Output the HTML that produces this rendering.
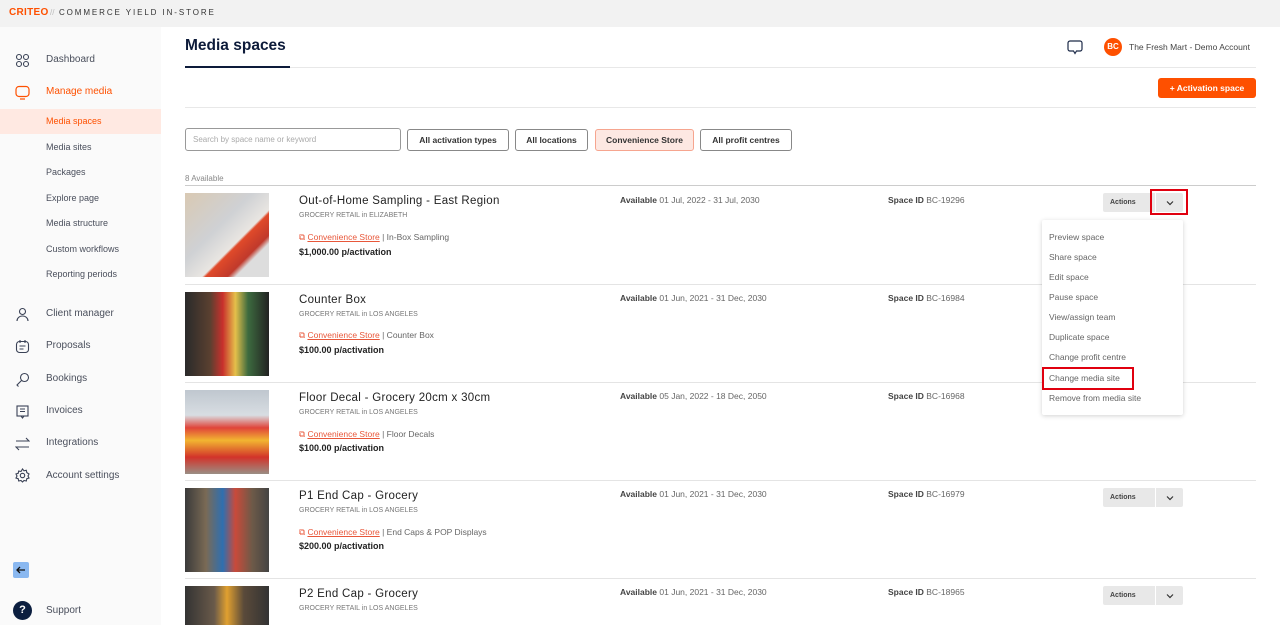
<!DOCTYPE html>
<html style="width:1280px;height:625px;overflow:hidden"><head><style>
*{margin:0;padding:0;box-sizing:border-box}
body{width:1280px;height:625px;overflow:hidden;font-family:"Liberation Sans",sans-serif;background:#fff;position:relative;color:#333}
.abs{position:absolute}
.top{left:0;top:0;width:1280px;height:27px;background:#f2f2f2}
.side{left:0;top:27px;width:161px;height:598px;background:#fafafa}
.nav{position:absolute;left:46px;font-size:10px;color:#4a4f5c}
.sub{position:absolute;left:46px;font-size:9px;color:#4a4f5c}
.ic{position:absolute;left:15px;width:15px;height:15px}
.btn{position:absolute;top:129px;height:22px;border:1px solid #888;border-radius:3px;font-size:8.5px;font-weight:bold;color:#333;display:flex;align-items:center;justify-content:center;background:#fff}
.row-t{position:absolute;left:299px;font-size:11.5px;color:#222;letter-spacing:.3px}
.row-s{position:absolute;left:299px;font-size:7px;color:#777}
.row-l{position:absolute;left:299px;font-size:8.5px;color:#666}
.row-l a{color:#e8573a;text-decoration:underline}
.row-p{position:absolute;left:299px;font-size:9px;color:#222;font-weight:bold}
.av{position:absolute;left:620px;font-size:8.5px;color:#666}
.av b,.sid b{color:#444}
.sid{position:absolute;left:888px;font-size:8.5px;color:#666}
.img{position:absolute;left:185px;width:84px;height:84px}
.hr{position:absolute;left:185px;width:1071px;height:1px;background:#e4e4e4}
.act{position:absolute;left:1103px;width:80px;height:19px;background:#e8e8e8;border-radius:2px;font-size:7px;font-weight:bold;color:#444;overflow:hidden}
.act span{position:absolute;left:7px;top:0;line-height:19px}
.act i{position:absolute;left:52px;top:0;width:1px;height:19px;background:#fff}
.act svg{position:absolute;left:63px;top:7px}
.mi{position:absolute;left:1049px;font-size:8.5px;color:#666}
</style></head><body>
<div class="abs top"></div>
<div class="abs" style="left:9px;top:7px;font-size:10px;font-weight:bold;color:#fe5000;letter-spacing:.3px">CRITEO</div>
<div class="abs" style="left:50px;top:8px;font-size:8px;color:#bbb">//</div>
<div class="abs" style="left:59px;top:8px;font-size:8px;color:#333;letter-spacing:1.9px">COMMERCE YIELD IN-STORE</div>

<div class="abs side"></div>
<svg class="ic" style="top:53px" viewBox="0 0 15 15" fill="none" stroke="#3a4256" stroke-width="1.1"><circle cx="4" cy="4" r="2.5"/><circle cx="11" cy="4" r="2.5"/><circle cx="4" cy="11" r="2.5"/><circle cx="11" cy="11" r="2.5"/></svg>
<div class="nav" style="top:54px">Dashboard</div>
<svg class="ic" style="top:85px" viewBox="0 0 15 15" fill="none" stroke="#fe5000" stroke-width="1.2"><rect x="1" y="1.5" width="13" height="10" rx="3"/><path d="M5 14h5"/></svg>
<div class="nav" style="top:86px;color:#fe5000">Manage media</div>
<div class="abs" style="left:0;top:109px;width:161px;height:25px;background:#ffe9e2"></div>
<div class="sub" style="top:116px;color:#fe5000">Media spaces</div>
<div class="sub" style="top:142px">Media sites</div>
<div class="sub" style="top:167px">Packages</div>
<div class="sub" style="top:193px">Explore page</div>
<div class="sub" style="top:218px">Media structure</div>
<div class="sub" style="top:244px">Custom workflows</div>
<div class="sub" style="top:269px">Reporting periods</div>
<svg class="ic" style="top:307px" viewBox="0 0 15 15" fill="none" stroke="#3a4256" stroke-width="1.1"><circle cx="7.5" cy="4.5" r="3"/><path d="M2 14c0-3 2.5-5 5.5-5s5.5 2 5.5 5"/></svg>
<div class="nav" style="top:308px">Client manager</div>
<svg class="ic" style="top:339px" viewBox="0 0 15 15" fill="none" stroke="#3a4256" stroke-width="1.1"><rect x="1.5" y="2.5" width="12" height="11" rx="3"/><path d="M5 1v3M10 1v3M4.5 7h6M4.5 10h4"/></svg>
<div class="nav" style="top:340px">Proposals</div>
<svg class="ic" style="top:372px" viewBox="0 0 15 15" fill="none" stroke="#3a4256" stroke-width="1.1"><circle cx="9.5" cy="5.5" r="4"/><path d="M6.5 8.5L2 13l1.5 1.5"/></svg>
<div class="nav" style="top:373px">Bookings</div>
<svg class="ic" style="top:404px" viewBox="0 0 15 15" fill="none" stroke="#3a4256" stroke-width="1.1"><rect x="2" y="2" width="11" height="10"/><path d="M5 5h5M5 7.5h5M6 12l1.5 2 1.5-2"/></svg>
<div class="nav" style="top:405px">Invoices</div>
<svg class="ic" style="top:436px" viewBox="0 0 15 15" fill="none" stroke="#3a4256" stroke-width="1.1"><path d="M1 5h13l-3-3M14 11H1l3 3"/></svg>
<div class="nav" style="top:437px">Integrations</div>
<svg class="ic" style="top:468px" viewBox="0 0 15 15" fill="none" stroke="#3a4256" stroke-width="1.1"><circle cx="7.5" cy="7.5" r="2.2"/><path d="M7.5 1l1.5 1.8 2.3-.5.5 2.3L14 6l-1 2 1 2-2.2.7-.5 2.3-2.3-.5L7.5 14 6 12.5l-2.3.5-.5-2.3L1 10l1-2-1-2 2.2-.7.5-2.3 2.3.5z"/></svg>
<div class="nav" style="top:470px">Account settings</div>
<div class="abs" style="left:13px;top:562px;width:16px;height:16px;background:#8ab8f0;border-radius:2px"></div>
<svg class="abs" style="left:15px;top:564px" width="12" height="12" viewBox="0 0 12 12" fill="none" stroke="#111" stroke-width="1.3"><path d="M10 6H2M5 3L2 6l3 3"/></svg>
<div class="abs" style="left:13px;top:601px;width:19px;height:19px;border-radius:50%;background:#0b1e3f;color:#fff;font-size:11px;font-weight:bold;text-align:center;line-height:19px">?</div>
<div class="nav" style="top:605px">Support</div>

<div class="abs" style="left:185px;top:37px;font-size:15.5px;font-weight:bold;color:#0d1b3a">Media spaces</div>
<div class="abs" style="left:185px;top:67px;width:1071px;height:1px;background:#e8e8e8"></div>
<div class="abs" style="left:185px;top:66px;width:105px;height:2px;background:#0d1b3a"></div>
<svg class="abs" style="left:1067px;top:40px" width="16" height="15" viewBox="0 0 16 15" fill="none" stroke="#1c2a48" stroke-width="1.2"><path d="M3 1h10a2 2 0 012 2v6a2 2 0 01-2 2H9.5L8 13.5 6.5 11H3a2 2 0 01-2-2V3a2 2 0 012-2z"/></svg>
<div class="abs" style="left:1104px;top:38px;width:18px;height:18px;border-radius:50%;background:#fe5000;color:#fff;font-size:8px;font-weight:bold;text-align:center;line-height:18px">BC</div>
<div class="abs" style="left:1129px;top:42px;font-size:8.5px;color:#444">The Fresh Mart - Demo Account</div>
<div class="abs" style="left:1158px;top:78px;width:98px;height:20px;background:#fe5000;border-radius:3px;color:#fff;font-size:8.5px;font-weight:bold;text-align:center;line-height:20px">+ Activation space</div>
<div class="abs" style="left:185px;top:107px;width:1071px;height:1px;background:#e8e8e8"></div>

<div class="abs" style="left:185px;top:128px;width:216px;height:23px;border:1px solid #999;border-radius:3px;font-size:8px;color:#aaa;padding:6px 7px">Search by space name or keyword</div>
<div class="btn" style="left:407px;width:102px">All activation types</div>
<div class="btn" style="left:515px;width:73px">All locations</div>
<div class="btn" style="left:595px;width:99px;background:#fde8e2;border-color:#f6a58f">Convenience Store</div>
<div class="btn" style="left:700px;width:92px">All profit centres</div>

<div class="abs" style="left:185px;top:174px;font-size:8px;color:#888">8 Available</div>
<div class="abs" style="left:185px;top:185px;width:1071px;height:1px;background:#ccc"></div>

<div class="img" style="top:193px;background:linear-gradient(135deg,#d9c9b3 0%,#cfd1d4 40%,#e9e6e2 60%,#e04a2a 62%,#c0392b 75%,#ddd 80%)"></div>
<div class="row-t" style="top:195px">Out-of-Home Sampling - East Region</div>
<div class="row-s" style="top:212px">GROCERY RETAIL in ELIZABETH</div>
<div class="row-l" style="top:232px"><span style="color:#e8573a">&#x29C9;</span> <a>Convenience Store</a> | In-Box Sampling</div>
<div class="row-p" style="top:247px">$1,000.00 p/activation</div>
<div class="av" style="top:195px"><b>Available</b> 01 Jul, 2022 - 31 Jul, 2030</div>
<div class="sid" style="top:195px"><b>Space ID</b> BC-19296</div>
<div class="act" style="top:193px"><span>Actions</span><i></i><svg width="8" height="6" viewBox="0 0 8 6" fill="none" stroke="#333" stroke-width="1.2"><path d="M1 1.5l3 3 3-3"/></svg></div>
<div class="abs" style="left:1150px;top:189px;width:38px;height:26px;border:2.5px solid #e0000f"></div>
<div class="hr" style="top:284px"></div>

<div class="img" style="top:292px;background:linear-gradient(90deg,#2a2a2a 0%,#5a4030 30%,#c9302c 45%,#e5c04a 60%,#3d6b3f 75%,#222 100%)"></div>
<div class="row-t" style="top:294px">Counter Box</div>
<div class="row-s" style="top:311px">GROCERY RETAIL in LOS ANGELES</div>
<div class="row-l" style="top:330px"><span style="color:#e8573a">&#x29C9;</span> <a>Convenience Store</a> | Counter Box</div>
<div class="row-p" style="top:345px">$100.00 p/activation</div>
<div class="av" style="top:293px"><b>Available</b> 01 Jun, 2021 - 31 Dec, 2030</div>
<div class="sid" style="top:293px"><b>Space ID</b> BC-16984</div>
<div class="hr" style="top:382px"></div>

<div class="img" style="top:390px;background:linear-gradient(180deg,#bfc7cf 0%,#d8dde2 30%,#e0443a 45%,#f2b531 60%,#d2332a 80%,#9a8e84 100%)"></div>
<div class="row-t" style="top:392px">Floor Decal - Grocery 20cm x 30cm</div>
<div class="row-s" style="top:409px">GROCERY RETAIL in LOS ANGELES</div>
<div class="row-l" style="top:429px"><span style="color:#e8573a">&#x29C9;</span> <a>Convenience Store</a> | Floor Decals</div>
<div class="row-p" style="top:443px">$100.00 p/activation</div>
<div class="av" style="top:391px"><b>Available</b> 05 Jan, 2022 - 18 Dec, 2050</div>
<div class="sid" style="top:391px"><b>Space ID</b> BC-16968</div>
<div class="hr" style="top:480px"></div>

<div class="img" style="top:488px;background:linear-gradient(90deg,#3a3a3a 0%,#7a6a55 25%,#2f6fb0 45%,#c94a3a 60%,#6d5a48 80%,#444 100%)"></div>
<div class="row-t" style="top:490px">P1 End Cap - Grocery</div>
<div class="row-s" style="top:507px">GROCERY RETAIL in LOS ANGELES</div>
<div class="row-l" style="top:527px"><span style="color:#e8573a">&#x29C9;</span> <a>Convenience Store</a> | End Caps &amp; POP Displays</div>
<div class="row-p" style="top:541px">$200.00 p/activation</div>
<div class="av" style="top:489px"><b>Available</b> 01 Jun, 2021 - 31 Dec, 2030</div>
<div class="sid" style="top:489px"><b>Space ID</b> BC-16979</div>
<div class="act" style="top:488px"><span>Actions</span><i></i><svg width="8" height="6" viewBox="0 0 8 6" fill="none" stroke="#333" stroke-width="1.2"><path d="M1 1.5l3 3 3-3"/></svg></div>
<div class="hr" style="top:578px"></div>

<div class="img" style="top:586px;height:39px;background:linear-gradient(90deg,#333 0%,#6a5a4a 35%,#e0a030 50%,#5a4a3a 70%,#333 100%)"></div>
<div class="row-t" style="top:588px">P2 End Cap - Grocery</div>
<div class="row-s" style="top:605px">GROCERY RETAIL in LOS ANGELES</div>
<div class="av" style="top:587px"><b>Available</b> 01 Jun, 2021 - 31 Dec, 2030</div>
<div class="sid" style="top:587px"><b>Space ID</b> BC-18965</div>
<div class="act" style="top:586px"><span>Actions</span><i></i><svg width="8" height="6" viewBox="0 0 8 6" fill="none" stroke="#333" stroke-width="1.2"><path d="M1 1.5l3 3 3-3"/></svg></div>

<div class="abs" style="left:1042px;top:220px;width:141px;height:195px;background:#fff;box-shadow:0 1px 5px rgba(0,0,0,.18);border-radius:2px"></div>
<div class="mi" style="top:232px">Preview space</div>
<div class="mi" style="top:252px">Share space</div>
<div class="mi" style="top:272px">Edit space</div>
<div class="mi" style="top:292px">Pause space</div>
<div class="mi" style="top:312px">View/assign team</div>
<div class="mi" style="top:332px">Duplicate space</div>
<div class="mi" style="top:352px">Change profit centre</div>
<div class="mi" style="top:373px">Change media site</div>
<div class="abs" style="left:1042px;top:367px;width:92px;height:23px;border:2.5px solid #e0000f"></div>
<div class="mi" style="top:393px">Remove from media site</div>
</body></html>
